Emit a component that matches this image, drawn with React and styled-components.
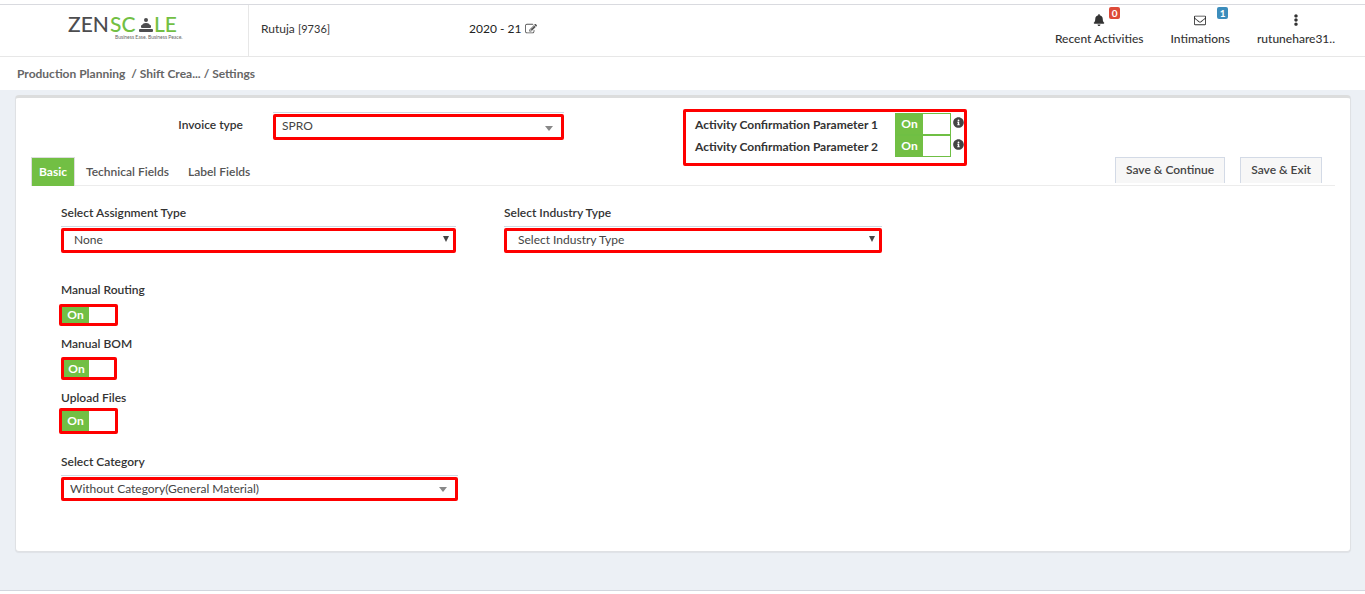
import React from "react";
import styled, { createGlobalStyle, css } from "styled-components";
import { FaBell, FaEllipsisV, FaInfoCircle } from "react-icons/fa";

const GlobalStyle = createGlobalStyle`
  *, *::before, *::after { box-sizing: border-box; }
  body {
    margin: 0;
    background: #fff;
    color: #333;
    font: 500 12px/18px Lato, "Liberation Sans", sans-serif;
  }
  button, select, input { font: inherit; color: inherit; }
  a { color: inherit; text-decoration: none; }
`;

const Page = styled.div`
  display: flex;
  flex-direction: column;
  padding-top: 4px;
`;

const Header = styled.header`
  display: flex;
  height: 53px;
  border-top: 1px solid #d9dadf;
  border-bottom: 1px solid #e7e7e7;
`;

const LogoLink = styled.a`
  flex: 0 0 249px;
  padding: 6px 0 0 67px;
  border-right: 1px solid #e7e7e7;
`;

const UserName = styled.div`
  flex: 0 0 208px;
  padding: 15px 0 0 12px;
  font-weight: 400;
`;

const UserCode = styled.span`
  font-size: 11px;
`;

const Year = styled.a`
  display: flex;
  gap: 4px;
  padding: 15px 0 0 12px;
  font-weight: 400;
  color: #222;
  svg { margin-top: 3px; color: #555; }
`;

const HeaderNav = styled.nav`
  display: flex;
  gap: 27px;
  margin-left: auto;
  padding-right: 30px;
`;

const NavItem = styled.a`
  position: relative;
  display: flex;
  flex-direction: column;
  align-items: center;
  gap: 4px;
  padding-top: 9px;
  color: #333;
`;

const Badge = styled.span`
  position: absolute;
  top: 2px;
  left: calc(50% + 10px);
  width: 11px;
  border-radius: 2px;
  background: ${(p) => p.$color};
  color: #fff;
  font-size: 10px;
  font-weight: 700;
  line-height: 12px;
  text-align: center;
`;

const IntimationBadge = styled(Badge)`
  left: calc(50% + 17px);
`;

const Breadcrumb = styled.nav`
  display: flex;
  height: 33px;
  padding: 8px 17px 0;
  color: #666;
  font-weight: 700;
  white-space: pre;
`;

const Content = styled.main`
  padding: 5px 14px 38px 15px;
  background: #ecf0f5;
  border-bottom: 1px solid #d2d6de;
`;

const Card = styled.section`
  min-height: 456px;
  padding: 11px 15px 50px;
  border: 1px solid #dfe1e4;
  border-top: 3px solid #dcdddd;
  border-radius: 4px;
  background: #fff;
  box-shadow: 0 1px 1px rgba(0, 0, 0, 0.06);
`;

const TopRow = styled.div`
  display: grid;
  grid-template-columns: 242fr 410fr 652fr;
  align-items: start;
`;

const InvoiceLabel = styled.label`
  justify-self: end;
  padding: 7px 30px 0 0;
  font-weight: 600;
`;

const FieldLabel = styled.label`
  display: block;
  width: max-content;
  line-height: 18px;
  font-weight: 600;
`;

const SelectWrap = styled.div`
  position: relative;
  margin-top: ${(p) => p.$gap || 0}px;
  width: ${(p) => p.$width}px;
  max-width: 100%;
  padding-top: 1px;
  border-top: 1px solid #cfd9e3;
  svg {
    position: absolute;
    right: ${(p) => (p.$native ? 7 : 11)}px;
    bottom: ${(p) => (p.$native ? 11 : 9)}px;
    pointer-events: none;
  }
`;

const Select = styled.select`
  display: block;
  appearance: none;
  width: 100%;
  height: ${(p) => p.$height || 25}px;
  padding: 0 24px 2px ${(p) => p.$inset}px;
  border: 3px solid #fe0000;
  border-radius: 2px;
  background: #fff;
  color: #444;
  font-weight: 400;
  line-height: 18px;
`;

const Parameters = styled.div`
  justify-self: start;
  display: flex;
  flex-direction: column;
  width: 284px;
  height: 57px;
  padding: 1px 0 0 9px;
  border: 3px solid #fe0000;
  border-radius: 2px;
`;

const ParameterRow = styled.div`
  display: flex;
  height: 22px;
  svg { flex: none; margin: 4px 0 0 2px; color: #444; }
`;

const ParameterLabel = styled.label`
  flex: 0 0 200px;
  padding-top: 3px;
  font-weight: 700;
`;

const framed = css`
  height: ${(p) => p.$height}px;
  width: ${(p) => (p.$wide ? 59 : 56)}px;
  margin-left: ${(p) => (p.$wide ? -2 : 0)}px;
  border: 3px solid #fe0000;
  border-radius: 2px;
`;

const SwitchOn = styled.span`
  display: flex;
  align-items: center;
  justify-content: center;
  width: 27px;
  background: #72bf44;
  color: #fff;
  font-weight: 700;
`;

const SwitchBox = styled.label`
  position: relative;
  display: flex;
  flex: none;
  width: 56px;
  height: 22px;
  border: 1px solid #6fbf44;
  background: #fff;
  cursor: pointer;
  ${(p) => p.$framed && framed}
  input {
    position: absolute;
    inset: 0;
    margin: 0;
    opacity: 0;
  }
  ${SwitchOn} {
    width: ${(p) => (p.$framed && !p.$wide ? 25 : 27)}px;
  }
`;

const TabBar = styled.div`
  display: flex;
  height: 29px;
  margin-top: -9px;
  border-bottom: 1px solid #ececec;
`;

const TabList = styled.div`
  display: flex;
`;

const Tab = styled.button`
  height: 29px;
  padding: 0 ${(p) => (p.$active ? 7 : 8)}px;
  margin-right: ${(p) => (p.$active ? 2 : 1)}px;
  border: 1px solid ${(p) => (p.$active ? "#ddd" : "transparent")};
  border-bottom: 0;
  background: ${(p) => (p.$active ? "#72bf44" : "transparent")};
  color: ${(p) => (p.$active ? "#fff" : "#555")};
  font-weight: ${(p) => (p.$active ? 700 : 600)};
`;

const Actions = styled.div`
  display: flex;
  gap: 15px;
  margin-left: auto;
  padding-right: 13px;
`;

const ActionButton = styled.button`
  height: 26px;
  padding: 0 10px 2px;
  border: 1px solid #d3dae6;
  border-bottom: 0;
  background: #f7f7f7;
  color: #444;
  font-weight: 600;
`;

const Form = styled.form`
  display: flex;
  flex-direction: column;
  padding: 18px 30px 0;
`;

const SelectRow = styled.div`
  display: grid;
  grid-template-columns: 443fr 801fr;
  margin-bottom: 28px;
`;

const SwitchField = styled.div`
  display: flex;
  flex-direction: column;
  gap: ${(p) => p.$gap}px;
  height: 54px;
`;

const CategoryField = styled.div`
  padding-top: 10px;
`;

function Logo() {
  return (
    <svg width="120" height="40" viewBox="0 -5 120 40" role="img" aria-label="Zenscale">
      <g fontFamily="Lato, sans-serif" fontSize="21">
        <text x="1" y="16" fill="#4d4d4f">ZEN</text>
        <text x="43" y="16" fill="#72bf44">SC</text>
        <text x="87" y="16" fill="#72bf44">LE</text>
        <text x="48" y="23" fill="#666" fontSize="5" fontWeight="400">Business Ease. Business Peace.</text>
      </g>
      <g fill="#4d4d4f">
        <circle cx="79" cy="4" r="2" />
        <path d="M75 10q0-3 4-3t4 3l-1 1h-6z" />
        <rect x="74" y="9" width="10" height="3" rx="1" />
        <rect x="72" y="13" width="14" height="3" rx="1" />
      </g>
    </svg>
  );
}

function EnvelopeIcon() {
  return (
    <svg width="12" height="12" viewBox="0 0 1792 1792" fill="currentColor" aria-hidden="true">
      <path d="M1664 1504v-768q-32 36-69 66-268 206-426 338-51 43-83 67t-86.500 48.500-102.500 24.500h-2q-48 0-102.500-24.500t-86.500-48.500-83-67q-158-132-426-338-37-30-69-66v768q0 13 9.500 22.500t22.500 9.500h1472q13 0 22.500-9.500t9.500-22.500zm0-1051v-24.500l-.5-13-3-12.500-5.500-9-9-7.500-14-2.500h-1472q-13 0-22.500 9.500t-9.500 22.500q0 168 147 284 193 152 401 317 6 5 35 29.500t46 37.500 44.500 31.500 50.500 27.500 43 9h2q20 0 43-9t50.500-27.500 44.500-31.500 46-37.500 35-29.500q208-165 401-317 54-43 100.500-115.500t46.500-131.500zm128-37v1088q0 66-47 113t-113 47h-1472q-66 0-113-47t-47-113v-1088q0-66 47-113t113-47h1472q66 0 113 47t47 113z" />
    </svg>
  );
}

function EditIcon() {
  return (
    <svg width="12" height="12" viewBox="0 0 1792 1792" fill="currentColor" aria-hidden="true">
      <path d="M888 1184l116-116-152-152-116 116v56h96v96h56zm440-720q-16-16-33 1l-350 350q-17 17-1 33t33-1l350-350q17-17 1-33zm80 594v190q0 119-84.500 203.500t-203.500 84.500h-832q-119 0-203.500-84.500t-84.500-203.500v-832q0-119 84.500-203.500t203.500-84.500h832q63 0 117 25 15 7 18 23 3 17-9 29l-49 49q-14 14-32 8-23-6-45-6h-832q-66 0-113 47t-47 113v832q0 66 47 113t113 47h832q66 0 113-47t47-113v-126q0-13 9-22l64-64q15-15 35-7t20 29zm-96-738l288 288-672 672h-288v-288zm444 132l-92 92-288-288 92-92q28-28 68-28t68 28l152 152q28 28 28 68t-28 68z" />
    </svg>
  );
}

function SelectBox({ id, value, width, gap, inset, native, height }) {
  return (
    <SelectWrap $width={width} $gap={gap} $native={native}>
      <Select id={id} $inset={inset} $height={height}>
        <option>{value}</option>
      </Select>
      {native ? (
        <svg width="6" height="6" viewBox="0 0 6 6" aria-hidden="true">
          <path d="M0 0h6L3 6z" fill="#444" />
        </svg>
      ) : (
        <svg width="8" height="5" viewBox="0 0 8 5" aria-hidden="true">
          <path d="M0 0h8L4 5z" fill="#888" />
        </svg>
      )}
    </SelectWrap>
  );
}

function Switch({ id, ...frame }) {
  return (
    <SwitchBox {...frame}>
      <input type="checkbox" id={id} defaultChecked />
      <SwitchOn>On</SwitchOn>
    </SwitchBox>
  );
}

const switches = [
  { id: "routing", label: "Manual Routing", gap: 5, height: 22, wide: true },
  { id: "bom", label: "Manual BOM", gap: 4, height: 23, wide: false },
  { id: "upload", label: "Upload Files", gap: 1, height: 26, wide: true },
];

export default function App() {
  return (
    <Page>
      <GlobalStyle />
      <Header>
        <LogoLink href="#home"><Logo /></LogoLink>
        <UserName>Rutuja <UserCode>[9736]</UserCode></UserName>
        <Year href="#year">2020 - 21 <EditIcon /></Year>
        <HeaderNav>
          <NavItem href="#activities">
            <FaBell size={12} />
            <Badge $color="#dd4b39">0</Badge>
            <span>Recent Activities</span>
          </NavItem>
          <NavItem href="#intimations">
            <EnvelopeIcon />
            <IntimationBadge $color="#3c8dbc">1</IntimationBadge>
            <span>Intimations</span>
          </NavItem>
          <NavItem href="#account">
            <FaEllipsisV size={12} />
            <span>rutunehare31..</span>
          </NavItem>
        </HeaderNav>
      </Header>
      <Breadcrumb aria-label="Breadcrumb">
        <a href="#planning">Production Planning</a>
        <span>{"  / "}</span>
        <a href="#shift">Shift Crea...</a>
        <span>{" / "}</span>
        <a href="#settings">Settings</a>
      </Breadcrumb>
      <Content>
        <Card>
          <TopRow>
            <InvoiceLabel htmlFor="invoice">Invoice type</InvoiceLabel>
            <SelectBox id="invoice" value="SPRO" width={291} inset={6} gap={3} height={26} />
            <Parameters>
              {[1, 2].map((n) => (
                <ParameterRow key={n}>
                  <ParameterLabel htmlFor={`param${n}`}>Activity Confirmation Parameter {n}</ParameterLabel>
                  <Switch id={`param${n}`} />
                  <FaInfoCircle size={11} />
                </ParameterRow>
              ))}
            </Parameters>
          </TopRow>
          <TabBar>
            <TabList role="tablist">
              <Tab type="button" role="tab" aria-selected="true" $active>Basic</Tab>
              <Tab type="button" role="tab" aria-selected="false">Technical Fields</Tab>
              <Tab type="button" role="tab" aria-selected="false">Label Fields</Tab>
            </TabList>
            <Actions>
              <ActionButton type="button">Save &amp; Continue</ActionButton>
              <ActionButton type="button">Save &amp; Exit</ActionButton>
            </Actions>
          </TabBar>
          <Form>
            <SelectRow>
              <div>
                <FieldLabel htmlFor="assignment">Select Assignment Type</FieldLabel>
                <SelectBox id="assignment" value="None" width={395} gap={4} inset={10} native />
              </div>
              <div>
                <FieldLabel htmlFor="industry">Select Industry Type</FieldLabel>
                <SelectBox id="industry" value="Select Industry Type" width={378} gap={4} inset={11} native />
              </div>
            </SelectRow>
            {switches.map((s) => (
              <SwitchField key={s.id} $gap={s.gap}>
                <FieldLabel htmlFor={s.id}>{s.label}</FieldLabel>
                <Switch id={s.id} $framed $height={s.height} $wide={s.wide} />
              </SwitchField>
            ))}
            <CategoryField>
              <FieldLabel htmlFor="category">Select Category</FieldLabel>
              <SelectBox id="category" value="Without Category(General Material)" width={397} gap={4} inset={6} height={24} />
            </CategoryField>
          </Form>
        </Card>
      </Content>
    </Page>
  );
}
